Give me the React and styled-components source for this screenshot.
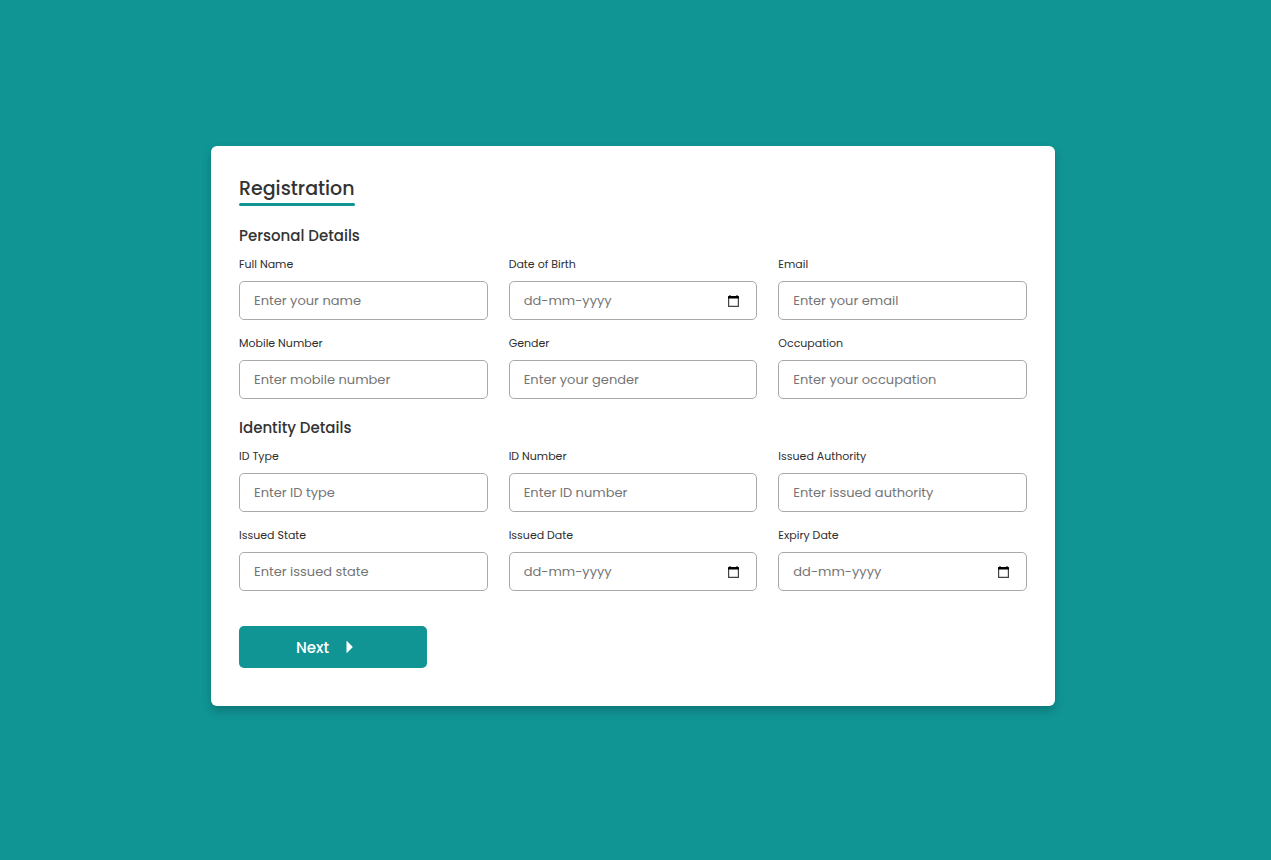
import React from "react";
import styled, { createGlobalStyle } from "styled-components";

const teal = "#109594";

const GlobalStyle = createGlobalStyle`
  * {
    box-sizing: border-box;
    margin: 0;
    padding: 0;
  }
  body, input, button {
    font-family: Poppins, Inter, "Open Sans", sans-serif;
  }
  body {
    background: ${teal};
  }
`;

const Page = styled.main`
  min-height: 100vh;
  display: flex;
  align-items: center;
  justify-content: center;
  padding: 0 5px 8px 0;
`;

const Card = styled.form`
  width: 100%;
  max-width: 844px;
  padding: 28px 28px 38px;
  border-radius: 6px;
  background: #fff;
  box-shadow: 0 5px 10px rgba(0, 0, 0, 0.2);
`;

const Title = styled.h1`
  width: fit-content;
  margin-bottom: 18px;
  font-size: 19px;
  line-height: 29px;
  font-weight: 500;
  color: #333;
  &::after {
    content: "";
    display: block;
    height: 3px;
    border-radius: 8px;
    background: ${teal};
  }
`;

const Section = styled.section`
  & + & {
    margin-top: 17px;
  }
`;

const SectionTitle = styled.h2`
  margin-bottom: 8px;
  font-size: 15px;
  line-height: 24px;
  font-weight: 500;
  color: #333;
`;

const Fields = styled.div`
  display: grid;
  grid-template-columns: repeat(3, minmax(0, 1fr));
  gap: 15px 21px;
  @media (max-width: 700px) {
    grid-template-columns: minmax(0, 1fr);
  }
`;

const FieldGroup = styled.div`
  display: flex;
  flex-direction: column;
  gap: 8px;
`;

const Label = styled.label`
  font-size: 11px;
  line-height: 17px;
  font-weight: 400;
  color: #2e2e2e;
`;

const Control = styled.div`
  display: flex;
  align-items: center;
  height: 39px;
  padding: 0 14px;
  border: 1px solid #aaa;
  border-radius: 5px;
  &:focus-within {
    box-shadow: 0 3px 6px rgba(0, 0, 0, 0.13);
  }
`;

const Input = styled.input`
  flex: 1;
  min-width: 0;
  height: 100%;
  border: none;
  outline: none;
  background: transparent;
  font-size: 13px;
  font-weight: 400;
  color: #333;
  &::placeholder {
    color: #757575;
    opacity: 1;
  }
`;

const PickerButton = styled.button`
  display: flex;
  border: none;
  background: transparent;
  cursor: pointer;
`;

const NextButton = styled.button`
  display: flex;
  align-items: center;
  justify-content: center;
  gap: 17px;
  width: 188px;
  max-width: 100%;
  height: 42px;
  margin-top: 35px;
  padding-right: 17px;
  border: none;
  border-radius: 5px;
  background: ${teal};
  color: #fff;
  font-size: 15px;
  font-weight: 500;
  cursor: pointer;
`;

const CalendarIcon = () => (
  <svg width="14" height="12" viewBox="0 0 14 12" aria-hidden="true">
    <path d="M0.6 2.5H10.4V11.4H0.6Z" fill="none" stroke="#444" strokeWidth="1.2" strokeLinejoin="round" />
    <path d="M0 1.6Q0 1 0.6 1H1.5V0H2.5V1H8.5V0H9.5V1H10.4Q11 1 11 1.6V3.6H0Z" fill="#000" />
  </svg>
);

const ArrowIcon = () => (
  <svg width="7" height="12" viewBox="0 0 7 12" aria-hidden="true">
    <path d="M0.5 0.5C0.5 0 1 0 1.4 0.4L6.4 5.4Q7 6 6.4 6.6L1.4 11.6C1 12 0.5 12 0.5 11.5Z" fill="#fff" />
  </svg>
);

const sections = [
  {
    title: "Personal Details",
    fields: [
      { id: "name", label: "Full Name", hint: "Enter your name" },
      { id: "birth", label: "Date of Birth", date: true },
      { id: "email", label: "Email", hint: "Enter your email" },
      { id: "mobile", label: "Mobile Number", hint: "Enter mobile number" },
      { id: "gender", label: "Gender", hint: "Enter your gender" },
      { id: "occupation", label: "Occupation", hint: "Enter your occupation" },
    ],
  },
  {
    title: "Identity Details",
    fields: [
      { id: "id-type", label: "ID Type", hint: "Enter ID type" },
      { id: "id-number", label: "ID Number", hint: "Enter ID number" },
      { id: "authority", label: "Issued Authority", hint: "Enter issued authority" },
      { id: "state", label: "Issued State", hint: "Enter issued state" },
      { id: "issued", label: "Issued Date", date: true },
      { id: "expiry", label: "Expiry Date", date: true },
    ],
  },
];

const Field = ({ id, label, hint, date }) => (
  <FieldGroup>
    <Label htmlFor={id}>{label}</Label>
    <Control>
      <Input id={id} name={id} type="text" placeholder={date ? "dd-mm-yyyy" : hint} />
      {date && (
        <PickerButton type="button" aria-label={`Choose ${label}`}>
          <CalendarIcon />
        </PickerButton>
      )}
    </Control>
  </FieldGroup>
);

export default function App() {
  return (
    <>
      <GlobalStyle />
      <Page>
        <Card onSubmit={(event) => event.preventDefault()}>
          <Title>Registration</Title>
          {sections.map((section) => (
            <Section key={section.title}>
              <SectionTitle>{section.title}</SectionTitle>
              <Fields>
                {section.fields.map((field) => (
                  <Field key={field.id} {...field} />
                ))}
              </Fields>
            </Section>
          ))}
          <NextButton type="submit">
            Next
            <ArrowIcon />
          </NextButton>
        </Card>
      </Page>
    </>
  );
}
